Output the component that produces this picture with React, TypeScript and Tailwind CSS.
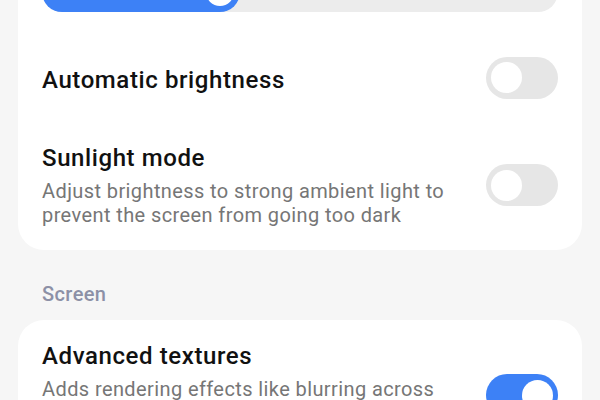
import React from 'react'

function Toggle({ on = false }: { on?: boolean }) {
  return (
    <div
      className={`flex h-[42px] w-[72px] shrink-0 items-center rounded-full px-[5px] ${
        on ? 'justify-end bg-[#3d81f6]' : 'justify-start bg-[#e6e6e6]'
      }`}
    >
      <div className="h-[31px] w-[31px] rounded-full bg-white" />
    </div>
  )
}

function SettingRow({
  title,
  desc,
  on,
  nudge = false,
}: {
  title: string
  desc?: string
  on?: boolean
  nudge?: boolean
}) {
  return (
    <div className="flex items-center justify-between gap-6 px-6">
      <div className={`min-w-0 flex-1 ${nudge ? 'pt-[5px]' : ''}`}>
        <div className="text-[24px] leading-[30px] font-medium tracking-[0.6px] text-[#111111]">
          {title}
        </div>
        {desc && (
          <div className="mt-[6px] text-[20px] leading-[24px] tracking-[0.4px] text-[#767676]">
            {desc}
          </div>
        )}
      </div>
      <Toggle on={on} />
    </div>
  )
}

export default function App() {
  return (
    <div
      className="h-[400px] w-[600px] overflow-hidden bg-[#f6f6f6]"
      style={{ fontFamily: 'Roboto, "Noto Sans", sans-serif' }}
    >
      <div className="-mt-[48px] px-[18px]">
        {/* Brightness card */}
        <div className="rounded-[26px] bg-white pt-5 pb-[23px]">
          {/* Slider */}
          <div className="px-6">
            <div className="h-[40px] rounded-full bg-[#ececec]">
              <div className="relative h-full w-[198px] rounded-full bg-[#3d81f6]">
                <div className="absolute top-[6px] right-[6px] h-[28px] w-[28px] rounded-full bg-white" />
              </div>
            </div>
          </div>

          <div className="flex h-[131px] flex-col justify-center">
            <SettingRow title="Automatic brightness" nudge />
          </div>

          <SettingRow
            title="Sunlight mode"
            desc="Adjust brightness to strong ambient light to prevent the screen from going too dark"
          />
        </div>

        {/* Screen section */}
        <div className="mt-8 mb-[14px] px-6 text-[20px] leading-[24px] font-medium tracking-[0.4px] text-[#8c90a6]">
          Screen
        </div>

        <div className="rounded-[26px] bg-white pt-[21px] pb-6">
          <SettingRow
            title="Advanced textures"
            desc="Adds rendering effects like blurring across the system. Turning this off can improve performance"
            on
          />
        </div>
      </div>
    </div>
  )
}
